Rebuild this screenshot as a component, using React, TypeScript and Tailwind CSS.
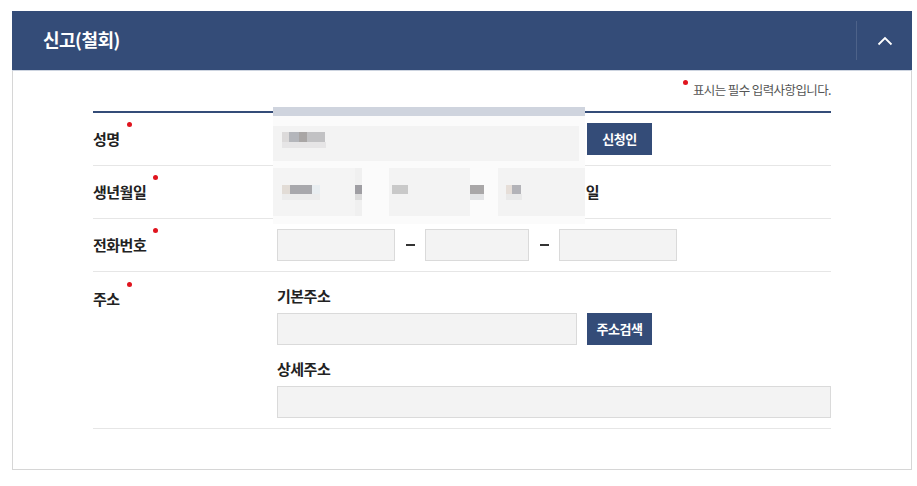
const font = { fontFamily: '"Noto Sans CJK KR", "Noto Sans", sans-serif' }

const Req = ({ children }: { children: React.ReactNode }) => (
  <span className="relative inline-block leading-5">
    {children}
    <span className="absolute -right-[12px] -top-[7px] w-[5px] h-[5px] rounded-full bg-[#e0141e]" />
  </span>
)

const Field = ({ className = '' }: { className?: string }) => (
  <div className={`h-[32px] bg-[#f3f3f3] border border-[#dadada] ${className}`} />
)

const NavyButton = ({ label }: { label: string }) => (
  <button className="h-[32px] w-[65px] bg-[#344c78] text-white text-[13px] font-bold tracking-[-0.5px]">
    {label}
  </button>
)

const Row = ({ label, children, top = false }: { label: string; children: React.ReactNode; top?: boolean }) => (
  <div className={`flex border-b border-[#e6e6e6] ${top ? 'items-start' : 'items-center min-h-[53px]'}`}>
    <div className={`w-[184px] shrink-0 text-[15px] font-bold text-[#222] tracking-[-0.5px] ${top ? 'pt-[16px]' : ''}`}>
      <Req>{label}</Req>
    </div>
    <div className="flex-1 min-w-0">{children}</div>
  </div>
)

const Blob = ({ className }: { className: string }) => <div className={`absolute ${className}`} />

// blurred-out personal data, drawn over the name / birth date inputs
const PrivacyMask = () => (
  <div className="absolute left-[180px] -top-[6px] w-[312px] h-[117px] bg-[#fbfbfb] pointer-events-none">
    <div className="h-[9px] bg-[#cfd4de]" />
    <div className="relative h-[108px]">
      <Blob className="left-0 top-[10px] w-[306px] h-[35px] bg-[#f3f3f3]" />
      <Blob className="left-[9px] top-[16px] w-[15px] h-[10px] bg-[#dcdada]" />
      <Blob className="left-[16px] top-[16px] w-[10px] h-[10px] bg-[#b4b6bb]" />
      <Blob className="left-[26px] top-[16px] w-[8px] h-[10px] bg-[#a9a6a5]" />
      <Blob className="left-[34px] top-[16px] w-[18px] h-[10px] bg-[#c2c2c4]" />
      <Blob className="left-[9px] top-[26px] w-[44px] h-[6px] bg-[#e6e5e6]" />

      <Blob className="left-0 top-[52px] w-[82px] h-[48px] bg-[#f4f4f4]" />
      <Blob className="left-[82px] top-[52px] w-[7px] h-[48px] bg-[#f0f0f0]" />
      <Blob className="left-[116px] top-[52px] w-[81px] h-[48px] bg-[#f3f3f3]" />
      <Blob className="left-[225px] top-[52px] w-[87px] h-[48px] bg-[#f3f3f3]" />
      <Blob className="left-[9px] top-[69px] w-[8px] h-[9px] bg-[#e2dcd6]" />
      <Blob className="left-[17px] top-[69px] w-[22px] h-[9px] bg-[#a8a8ac]" />
      <Blob className="left-[39px] top-[69px] w-[8px] h-[9px] bg-[#e9eef1]" />
      <Blob className="left-[9px] top-[78px] w-[38px] h-[6px] bg-[#ececec]" />
      <Blob className="left-[82px] top-[69px] w-[7px] h-[9px] bg-[#9f9ea3]" />
      <Blob className="left-[82px] top-[78px] w-[7px] h-[6px] bg-[#dcdcdc]" />
      <Blob className="left-[119px] top-[69px] w-[16px] h-[9px] bg-[#c9c9c9]" />
      <Blob className="left-[197px] top-[69px] w-[14px] h-[9px] bg-[#a9a7a8]" />
      <Blob className="left-[197px] top-[78px] w-[14px] h-[6px] bg-[#e3e4e6]" />
      <Blob className="left-[233px] top-[69px] w-[6px] h-[9px] bg-[#e6ded8]" />
      <Blob className="left-[239px] top-[69px] w-[9px] h-[9px] bg-[#b3b3b8]" />
      <Blob className="left-[233px] top-[78px] w-[16px] h-[6px] bg-[#e9e9e9]" />
    </div>
  </div>
)

export default function App() {
  return (
    <div className="w-[917px] h-[486px] bg-white pt-[11px] px-[12px]" style={font}>
      <div className="w-[900px] h-[459px] border border-[#d6d6d6] border-t-0">
        <div className="h-[60px] -mx-px bg-[#344c78] border-b border-[#cdd4e0] flex items-center">
          <h2 className="flex-1 pl-[31px] text-white text-[18px] font-bold tracking-[-0.5px] pb-[2px]">신고(철회)</h2>
          <div className="w-px h-[39px] bg-[#4d6289]" />
          <div className="w-[55px] flex justify-center">
            <svg width="16" height="10" viewBox="0 0 16 10" fill="none">
              <path d="M1.5 8.5 L8 2 L14.5 8.5" stroke="white" strokeWidth="1.8" />
            </svg>
          </div>
        </div>

        <div className="px-[80px]">
          <div className="h-[40px] flex items-center justify-end pb-[2px]">
            <span className="relative text-[12.5px] text-[#555] tracking-[-0.6px]">
              <span className="absolute -left-[10px] -top-[1px] w-[5px] h-[5px] rounded-full bg-[#e0141e]" />
              표시는 필수 입력사항입니다.
            </span>
          </div>

          <div className="relative border-t-2 border-[#344c78]">
            <Row label="성명">
              <div className="flex items-center gap-[10px]">
                <Field className="w-[300px]" />
                <NavyButton label="신청인" />
              </div>
            </Row>
            <Row label="생년월일">
              <div className="flex items-center gap-[6px] text-[15px] font-bold text-[#222]">
                <Field className="w-[82px]" />
                <span>년</span>
                <Field className="w-[82px]" />
                <span>월</span>
                <Field className="w-[84px]" />
                <span className="ml-[3px]">일</span>
              </div>
            </Row>
            <Row label="전화번호">
              <div className="flex items-center">
                <Field className="w-[118px]" />
                <span className="w-[30px] flex justify-center"><span className="w-[9px] h-[2px] bg-[#333]" /></span>
                <Field className="w-[104px]" />
                <span className="w-[30px] flex justify-center"><span className="w-[9px] h-[2px] bg-[#333]" /></span>
                <Field className="w-[118px]" />
              </div>
            </Row>
            <Row label="주소" top>
              <div className="pt-[12px] pb-[10px]">
                <div className="h-6 leading-6 text-[15px] font-bold text-[#222] tracking-[-0.5px]">기본주소</div>
                <div className="flex items-center gap-[10px] mt-[5px]">
                  <Field className="w-[300px]" />
                  <NavyButton label="주소검색" />
                </div>
                <div className="h-6 leading-6 mt-[12px] text-[15px] font-bold text-[#222] tracking-[-0.5px]">상세주소</div>
                <Field className="w-full mt-[5px]" />
              </div>
            </Row>
            <PrivacyMask />
          </div>
        </div>
      </div>
    </div>
  )
}
